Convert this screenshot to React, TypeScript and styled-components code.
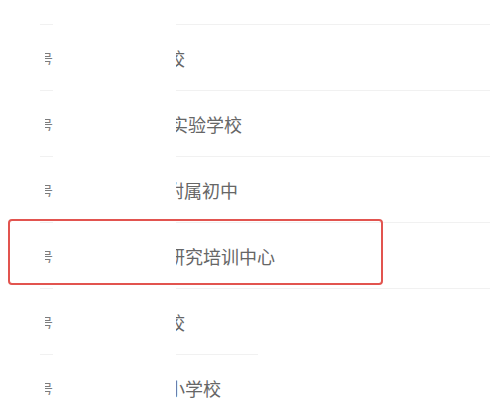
import React from "react";
import styled, { createGlobalStyle } from "styled-components";

const Global = createGlobalStyle`
  html, body { margin: 0; padding: 0; background: #ffffff; }
  body { overflow: hidden; font-family: "Noto Sans CJK SC", "Noto Sans", sans-serif; }
`;

const Screen = styled.div`
  width: 490px;
  height: 404px;
  overflow: hidden;
  background: #ffffff;
`;

const List = styled.div`
  display: flex;
  flex-direction: column;
  margin-top: -41px;
`;

const Row = styled.div`
  position: relative;
  display: flex;
  height: 66px;
  padding-left: 40px;
  box-sizing: border-box;
`;

const LeftCell = styled.div`
  width: 13px;
  height: 66px;
  box-sizing: border-box;
  border-bottom: 1px solid #f1f1f1;
  display: flex;
  align-items: center;
  justify-content: flex-end;
`;

const GlyphClip = styled.div`
  width: 8px;
  display: flex;
  justify-content: flex-end;
  overflow: hidden;
`;

const Glyph = styled.span`
  flex-shrink: 0;
  font-size: 14px;
  line-height: 1;
  color: #7c7c7c;
`;

const RightCell = styled.div<{ $line?: number }>`
  margin-left: 123px;
  flex: 1;
  height: 66px;
  box-sizing: border-box;
  display: flex;
  align-items: center;
  overflow: hidden;
  font-size: 18px;
  color: #666666;
  position: relative;
  &::after {
    content: "";
    position: absolute;
    left: 0;
    bottom: 0;
    height: 1px;
    width: ${(p) => (p.$line ? `${p.$line}px` : "100%")};
    background: #f1f1f1;
  }
`;

const Label = styled.span<{ $shift: number }>`
  flex-shrink: 0;
  white-space: nowrap;
  margin-left: ${(p) => -p.$shift}px;
`;

const Highlight = styled.div`
  position: absolute;
  left: 8px;
  top: -4px;
  width: 375px;
  height: 66px;
  box-sizing: border-box;
  border: 2px solid #e2544f;
  border-radius: 4px;
  pointer-events: none;
`;

const rows: { text: string; shift: number; line?: number; hl?: boolean }[] = [
  { text: "", shift: 0 },
  { text: "市第一中学校", shift: 99 },
  { text: "师范大学实验学校", shift: 78 },
  { text: "师范大学附属初中", shift: 82 },
  { text: "教育科学研究培训中心", shift: 81, hl: true },
  { text: "市第二中学校", shift: 99, line: 82 },
  { text: "实验小学校", shift: 45 },
];

export default function App() {
  return (
    <Screen>
      <Global />
      <List>
        {rows.map((r, i) => (
          <Row key={i}>
            <LeftCell>
              <GlyphClip>
                <Glyph>号</Glyph>
              </GlyphClip>
            </LeftCell>
            <RightCell $line={r.line}>
              <Label $shift={r.shift}>{r.text}</Label>
            </RightCell>
            {r.hl && <Highlight />}
          </Row>
        ))}
      </List>
    </Screen>
  );
}
